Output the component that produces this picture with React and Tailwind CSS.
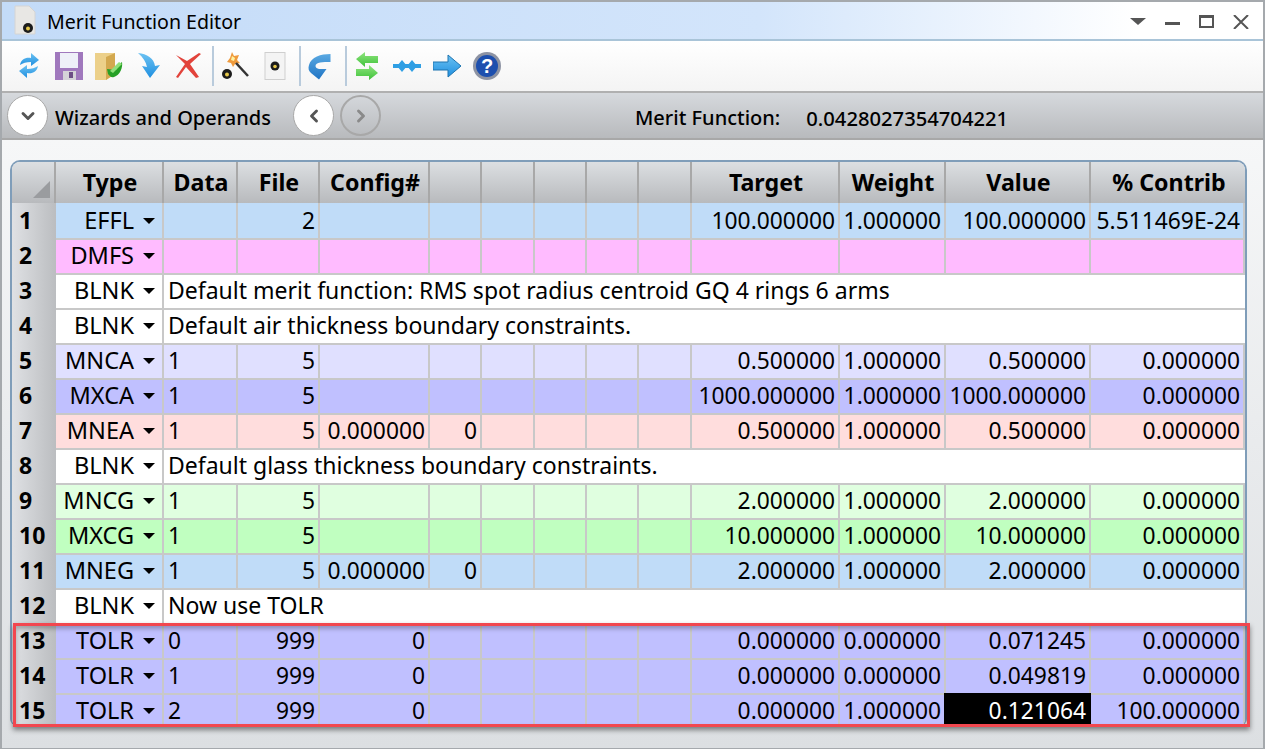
import { ChevronDown, ChevronLeft, ChevronRight } from "lucide-react";

const COLS = "grid grid-cols-[44px_108px_74px_82px_110px_52px_53px_52px_52px_53px_148px_106px_145px_154px]";
const HEADERS = ["Type", "Data", "File", "Config#", "", "", "", "", "", "Target", "Weight", "Value", "% Contrib"];

const ROWS = [
  { type: "EFFL", bg: "bg-[#c0dcf8]", file: "2", target: "100.000000", weight: "1.000000", value: "100.000000", contrib: "5.511469E-24" },
  { type: "DMFS", bg: "bg-[#ffbbff]" },
  { type: "BLNK", bg: "bg-white", comment: "Default merit function: RMS spot radius centroid GQ 4 rings 6 arms" },
  { type: "BLNK", bg: "bg-white", comment: "Default air thickness boundary constraints." },
  { type: "MNCA", bg: "bg-[#e0e0ff]", data: "1", file: "5", target: "0.500000", weight: "1.000000", value: "0.500000", contrib: "0.000000" },
  { type: "MXCA", bg: "bg-[#c0c0ff]", data: "1", file: "5", target: "1000.000000", weight: "1.000000", value: "1000.000000", contrib: "0.000000" },
  { type: "MNEA", bg: "bg-[#ffdddd]", data: "1", file: "5", config: "0.000000", c1: "0", target: "0.500000", weight: "1.000000", value: "0.500000", contrib: "0.000000" },
  { type: "BLNK", bg: "bg-white", comment: "Default glass thickness boundary constraints." },
  { type: "MNCG", bg: "bg-[#e0ffe0]", data: "1", file: "5", target: "2.000000", weight: "1.000000", value: "2.000000", contrib: "0.000000" },
  { type: "MXCG", bg: "bg-[#c0ffc0]", data: "1", file: "5", target: "10.000000", weight: "1.000000", value: "10.000000", contrib: "0.000000" },
  { type: "MNEG", bg: "bg-[#c0dcf8]", data: "1", file: "5", config: "0.000000", c1: "0", target: "2.000000", weight: "1.000000", value: "2.000000", contrib: "0.000000" },
  { type: "BLNK", bg: "bg-white", comment: "Now use TOLR" },
  { type: "TOLR", bg: "bg-[#c0c0ff]", data: "0", file: "999", config: "0", target: "0.000000", weight: "0.000000", value: "0.071245", contrib: "0.000000" },
  { type: "TOLR", bg: "bg-[#c0c0ff]", data: "1", file: "999", config: "0", target: "0.000000", weight: "0.000000", value: "0.049819", contrib: "0.000000", aboveSelected: true },
  { type: "TOLR", bg: "bg-[#c0c0ff]", data: "2", file: "999", config: "0", target: "0.000000", weight: "1.000000", value: "0.121064", contrib: "100.000000", selected: true },
];

const Lens = ({ x, y, r = 5 }) => (
  <g>
    <circle cx={x} cy={y} r={r} fill="#1c1c1c" />
    <circle cx={x} cy={y + 0.5} r={r * 0.4} fill="#e6c84a" />
  </g>
);

const icons = {
  sync: (
    <g fill="url(#blue)">
      <path d="M5 13C6 7 11 5 16 6V1l8 7-8 6v-4C11 10 8 11 5 13Z" />
      <path d="M23 14c-1 6-6 8-11 7v5l-8-7 8-6v4c5 0 8-1 11-3Z" />
    </g>
  ),
  save: (
    <g>
      <rect width="28" height="28" fill="#a078bd" />
      <rect x="5" y="1" width="18" height="15" fill="#eef0f8" />
      <rect x="8" y="19" width="13" height="9" fill="#d5d2d8" />
      <rect x="14" y="20" width="4" height="6" fill="#6d4d86" />
    </g>
  ),
  open: (
    <g>
      <path d="M0 1h20v21l-9 6H0Z" fill="#ecd08a" />
      <path d="M11 5l9-4v21l-9 6Z" fill="#d3a84f" />
      <path d="M27 10c1 6-2 13-8 15-3 1-4-1-6-3l-1-5 9 1 1-4Z" fill="#26a026" />
      <path d="M15 19l9-9 3 2-9 9Z" fill="#8fe07a" />
    </g>
  ),
  down: <path d="M3 1c9 1 16 5 17 13l5-1-10 13-8-12 5 1C11 10 8 5 3 1Z" fill="url(#blue)" />,
  del: <path d="M1 3l11 6 12-8 2 1-11 10 9 13-3 1-10-11-8 11-2-1 9-13Z" fill="#e2433b" />,
  wand: (
    <g>
      <path d="M11 0l2 4 5-1-2 5 3 3-5 1-2 3-2-4-4-1 3-4Z" fill="#ef9a3c" />
      <path d="M11 4l3 2-1 3-3-1Z" fill="#fff2a0" />
      <path d="M15 11l12 13" stroke="#333" strokeWidth="2.5" />
      <Lens x={6} y={22} />
    </g>
  ),
  lens: (
    <g>
      <rect x="4" y="0.5" width="20" height="27" fill="#f4f4f4" stroke="#cfcfcf" />
      <Lens x={14} y={14} r={4.5} />
    </g>
  ),
  undo: <path d="M25.5 2v8C18 10 10.5 10 10.5 14c0 1.5 1.500 2.500 3.500 3h7.500L14 27.500 6 21C3.500 19 3 16 4 13 6 5 16 2 25.500 2Z" fill="url(#deepblue)" />,
  swap: (
    <g fill="url(#green)">
      <path d="M3 7l9-7v4h13v7H12v4Z" />
      <path d="M25 21l-9 7v-4H3v-7h13v-4Z" />
    </g>
  ),
  link: (
    <g fill="#2f9fe4">
      <rect y="12" width="28" height="4" />
      <path d="M9 8l5 6-5 6-5-6ZM19 8l5 6-5 6-5-6Z" />
    </g>
  ),
  next: <path d="M0 10h15V3l13 11-13 11v-7H0Z" fill="url(#blue)" stroke="#1f74b0" />,
  help: (
    <g>
      <circle cx="14" cy="14" r="14" fill="#8d93a3" />
      <circle cx="14" cy="14" r="11" fill="#1d4fae" />
      <text x="14" y="21" textAnchor="middle" fontSize="20" fontWeight="700" fill="#fff" fontFamily="'Liberation Sans', sans-serif">?</text>
    </g>
  ),
};

const Tool = ({ name, className = "w-10" }) => (
  <div className={`flex justify-center ${className}`}>
    <svg width="28" height="28" viewBox="0 0 28 28">{icons[name]}</svg>
  </div>
);

const Sep = ({ className }) => <div className={`h-10 w-[2px] bg-[#b9cbdc] ${className}`} />;

const Caret = () => <span className="h-0 w-0 border-x-[6.5px] border-t-[6px] border-x-transparent border-t-black" />;

const Cell = ({ children, left, className = "" }) => (
  <div className={`flex items-center overflow-hidden border-r-2 border-b-2 border-[#c8c8c8] whitespace-nowrap ${left ? "justify-start pl-[4px]" : "justify-end pr-[3px]"} ${className}`}>
    {children}
  </div>
);

const Row = ({ row, num, last }) => (
  <div className={`${COLS} ${row.bg} ${last ? "h-[32px]" : "h-[35px]"} text-[22.8px]`}>
    <div className="flex items-center border-b-2 border-[#a8a8a8] bg-gradient-to-r from-[#dfe1e4] to-[#bbbdc0] pl-[7px] text-[23px] font-bold">{num}</div>
    <div className="flex items-center justify-end gap-[9px] border-r-2 border-b-2 border-[#c8c8c8] pr-[7px]">
      <span className="text-[23.5px]">{row.type}</span>
      <Caret />
    </div>
    {row.comment ? (
      <div className="col-span-12 flex items-center border-b-2 border-[#c8c8c8] pl-[4px] text-[23px]">{row.comment}</div>
    ) : (
      <>
        <Cell left>{row.data}</Cell>
        <Cell>{row.file}</Cell>
        <Cell>{row.config}</Cell>
        <Cell>{row.c1}</Cell>
        <Cell />
        <Cell />
        <Cell />
        <Cell />
        <Cell>{row.target}</Cell>
        <Cell className={row.selected ? "border-r-black" : ""}>{row.weight}</Cell>
        <Cell className={row.selected ? "border-r-black bg-black text-white" : row.aboveSelected ? "border-b-black" : ""}>{row.value}</Cell>
        <Cell className="border-r-0">{row.contrib}</Cell>
      </>
    )}
  </div>
);

export default function App() {
  return (
    <div className="h-[750px] w-[1267px] bg-white font-['Noto_Sans',sans-serif] text-black">
      <svg className="absolute h-0 w-0">
        <defs>
          <linearGradient id="blue" x1="0" y1="0" x2="0" y2="1">
            <stop offset="0" stopColor="#6cc2f2" />
            <stop offset="1" stopColor="#1f8fe0" />
          </linearGradient>
          <linearGradient id="deepblue" x1="0" y1="0" x2="0" y2="1">
            <stop offset="0" stopColor="#5aa9e2" />
            <stop offset="1" stopColor="#1f74c4" />
          </linearGradient>
          <linearGradient id="green" x1="0" y1="0" x2="0" y2="1">
            <stop offset="0" stopColor="#8fe47e" />
            <stop offset="1" stopColor="#3fc23a" />
          </linearGradient>
        </defs>
      </svg>
      <div className="relative flex h-[749px] w-[1265px] flex-col border-2 border-b-[1px] border-[#a5a9ad]">
        {/* title bar */}
        <div className="flex h-[39px] items-center justify-between border-b-2 border-[#a9c4d8] bg-gradient-to-r from-[#c3dbf8] via-[#d3e5fb] via-60% to-white to-90% pl-[10px] pr-[14px]">
          <div className="flex items-center gap-[9px]">
            <svg width="26" height="30" viewBox="0 0 26 30">
              <path d="M3 1h14l6 6v22H3Z" fill="#e8e7e4" stroke="#d4d4d4" />
              <Lens x={16} y={23} r={5} />
            </svg>
            <span className="mt-[2px] text-[19.6px]">Merit Function Editor</span>
          </div>
          <div className="mt-[2px] flex items-center gap-[19px]">
            <span className="h-0 w-0 border-x-[8px] border-t-[7px] border-x-transparent border-t-[#555]" />
            <span className="mt-[3px] h-[3px] w-[15px] bg-[#555]" />
            <span className="h-[13px] w-[15px] border-2 border-t-[3px] border-[#555]" />
            <svg width="16" height="14" viewBox="0 0 16 14">
              <path d="M1 0l14 14M15 0L1 14" stroke="#555" strokeWidth="2" />
            </svg>
          </div>
        </div>

        {/* toolbar */}
        <div className="flex h-[52px] items-center border-b-2 border-[#b0b0b0] bg-gradient-to-b from-white to-[#f4f4f4] pl-[7px]">
          <Tool name="sync" />
          <Tool name="save" />
          <Tool name="open" />
          <Tool name="down" />
          <Tool name="del" />
          <Sep className="ml-[3px] mr-[1px]" />
          <Tool name="wand" />
          <Tool name="lens" />
          <Sep className="ml-[4px]" />
          <Tool name="undo" className="w-9" />
          <Sep className="ml-2" />
          <Tool name="swap" />
          <Tool name="link" />
          <Tool name="next" />
          <Tool name="help" />
        </div>

        {/* wizards bar */}
        <div className="flex h-[47px] items-center border-b-2 border-[#a8a8a8] bg-gradient-to-b from-[#d6d9dd] to-[#b8babd] pl-[5px] text-[20px] font-medium">
          <button className="flex h-[41px] w-[41px] items-center justify-center rounded-full border border-[#a8a8a8] bg-white text-[#555]">
            <ChevronDown size={20} strokeWidth={3.5} />
          </button>
          <span className="mt-[5px] ml-[7px] w-[238px]">Wizards and Operands</span>
          <button className="flex h-[41px] w-[41px] items-center justify-center rounded-full border border-[#a8a8a8] bg-white text-[#555]">
            <ChevronLeft size={20} strokeWidth={3.5} />
          </button>
          <button className="ml-[6px] flex h-[41px] w-[41px] items-center justify-center rounded-full border-2 border-[#a8a8a8] text-[#8a8a8a]">
            <ChevronRight size={20} strokeWidth={3.5} />
          </button>
          <span className="mt-[5px] ml-[254px]">Merit Function:</span>
          <span className="mt-[5px] ml-[26px] text-[20.2px]">0.0428027354704221</span>
        </div>

        {/* operand table */}
        <div className="flex-1 bg-gradient-to-b from-[#f6f7f8] to-[#dcdfe2] pt-[20px] pl-[8px]">
          <div className="w-[1237px] overflow-hidden rounded-t-[10px] rounded-b-[6px] border-2 border-b-0 border-[#7f9db9]">
            <div className={`${COLS} h-[41px] bg-gradient-to-b from-[#dcdfe2] to-[#b8babd] text-[23.2px] font-bold`}>
              <div className="relative border-r-2 border-[#a8a8a8]">
                <span className="absolute right-[4px] bottom-[5px] h-0 w-0 border-b-[17px] border-l-[17px] border-b-[#9a9c9f] border-l-transparent" />
              </div>
              {HEADERS.map((h, i) => (
                <div key={i} className={`flex items-center justify-center whitespace-nowrap border-[#a8a8a8] pl-[2px] ${i < HEADERS.length - 1 ? "border-r-2" : ""}`}>
                  {h}
                </div>
              ))}
            </div>
            {ROWS.map((row, i) => (
              <Row key={i} row={row} num={i + 1} last={i === ROWS.length - 1} />
            ))}
          </div>
        </div>

        {/* highlight around the TOLR rows */}
        <div className="pointer-events-none absolute top-[621px] left-[11px] h-[104px] w-[1237px] border-[3px] border-[#f2474f] shadow-[0_3px_5px_rgba(0,0,0,0.45),inset_0_3px_4px_rgba(0,0,0,0.25)]" />
      </div>
    </div>
  );
}
